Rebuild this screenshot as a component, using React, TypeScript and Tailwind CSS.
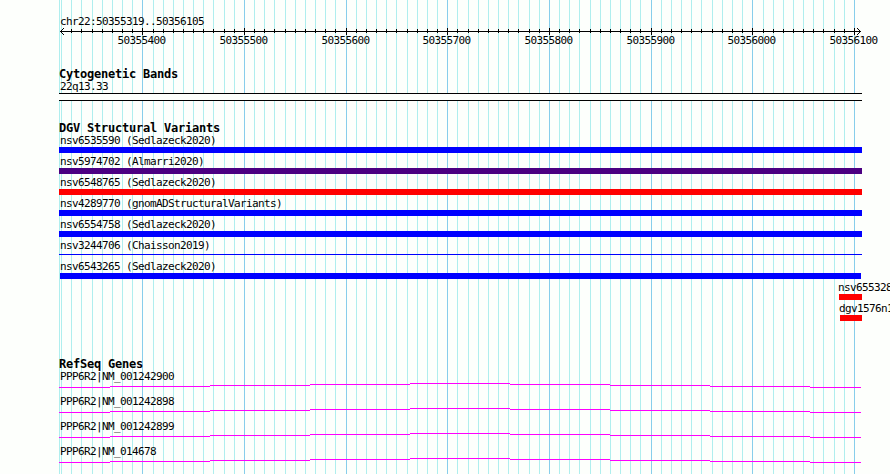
const MINOR = [
  59, 61, 71, 81, 92, 102, 112, 122, 132, 153, 163, 173, 183, 193, 203, 213, 224, 234, 254, 264, 274, 285, 295, 305,
  315, 325, 335, 356, 366, 376, 386, 396, 407, 417, 427, 437, 457, 468, 478, 488, 498, 508, 518, 529, 539, 559, 569,
  579, 590, 600, 610, 620, 630, 640, 661, 671, 681, 691, 701, 712, 722, 732, 742, 763, 773, 783, 793, 803, 813, 823,
  834, 844,
];

const MAJOR = [
  { x: 142, label: "50355400" },
  { x: 244, label: "50355500" },
  { x: 346, label: "50355600" },
  { x: 447, label: "50355700" },
  { x: 549, label: "50355800" },
  { x: 651, label: "50355900" },
  { x: 752, label: "50356000" },
  { x: 854, label: "50356100" },
];

const VARIANTS = [
  { name: "nsv6535590 (Sedlazeck2020)", bar: "h-1.5 bg-[#0000ff]" },
  { name: "nsv5974702 (Almarri2020)", bar: "h-1.5 bg-[#4b0082]" },
  { name: "nsv6548765 (Sedlazeck2020)", bar: "h-1.5 bg-[#ff0000]" },
  { name: "nsv4289770 (gnomADStructuralVariants)", bar: "h-1.5 bg-[#0000ff]" },
  { name: "nsv6554758 (Sedlazeck2020)", bar: "h-1.5 bg-[#0000ff]" },
  { name: "nsv3244706 (Chaisson2019)", bar: "mt-0.5 h-px bg-[#0000ff]" },
  { name: "nsv6543265 (Sedlazeck2020)", bar: "mx-px h-1.5 bg-[#0000ff]" },
];

const GENES = ["PPP6R2|NM_001242900", "PPP6R2|NM_001242898", "PPP6R2|NM_001242899", "PPP6R2|NM_014678"];

const INTRON = [
  "mt-1 w-[51px]",
  "mt-[3px] w-[100px]",
  "mt-0.5 w-[100px]",
  "mt-px w-[100px]",
  "mt-0 w-[100px]",
  "mt-px w-[100px]",
  "mt-0.5 w-[100px]",
  "mt-[3px] w-[100px]",
  "mt-1 w-[51px]",
];

const LABEL = "h-3 whitespace-pre pl-px text-[11px] leading-3 tracking-[-0.622px]";
const HEADING = "h-3.5 whitespace-pre text-[12px] font-bold leading-[14px] tracking-[-0.224px]";

function Gridlines() {
  return (
    <svg className="absolute inset-0" width="890" height="474" shapeRendering="crispEdges" aria-hidden="true">
      {MINOR.map((x) => (
        <rect key={x} x={x} y="0" width="1" height="474" fill="#afeeee" />
      ))}
      {MAJOR.map(({ x }) => (
        <rect key={x} x={x} y="0" width="1" height="474" fill="#87ceeb" />
      ))}
    </svg>
  );
}

function Ruler() {
  return (
    <svg className="-ml-[59px] block" width="890" height="22" viewBox="0 26 890 22">
      <g shapeRendering="crispEdges">
        <rect x="60" y="31" width="801" height="1" />
        {MINOR.slice(2).map((x) => (
          <rect key={x} x={x} y="29" width="1" height="4" />
        ))}
        {MAJOR.map(({ x }) => (
          <rect key={x} x={x} y="28" width="1" height="7" />
        ))}
        {[1, 2, 3].map((d) => (
          <g key={d}>
            <rect x={60 + d} y={31 - d} width="1" height="1" />
            <rect x={60 + d} y={31 + d} width="1" height="1" />
            <rect x={860 - d} y={31 - d} width="1" height="1" />
            <rect x={860 - d} y={31 + d} width="1" height="1" />
          </g>
        ))}
      </g>
      {MAJOR.map(({ x, label }) => (
        <text key={x} x={x - 24.5} y="44" className="text-[11px] tracking-[-0.622px]">
          {label}
        </text>
      ))}
    </svg>
  );
}

export default function App() {
  return (
    <div className="relative h-[474px] w-[890px] overflow-hidden bg-[#fdfffc] font-['DejaVu_Sans_Mono',monospace] text-black">
      <Gridlines />
      <main className="relative ml-[59px] flex w-[803px] flex-col pt-4">
        <div className={`${LABEL} mb-[-2px]`}>chr22:50355319..50356105</div>
        <Ruler />

        <section className="mt-[19px]">
          <h2 className={HEADING}>Cytogenetic Bands</h2>
          <div className={LABEL}>22q13.33</div>
          <div className="h-2 border-y border-black bg-[#fdfffc]" />
        </section>

        <section className="mt-5">
          <h2 className={HEADING}>DGV Structural Variants</h2>
          {VARIANTS.map((v) => (
            <div key={v.name} className="h-[21px]">
              <div className={LABEL}>{v.name}</div>
              <div className={v.bar} />
            </div>
          ))}
          <div className="ml-[780px] h-[21px]">
            <div className={`${LABEL} -ml-0.5`}>nsv655328</div>
            <div className="h-1.5 bg-[#ff0000]" />
          </div>
          <div className="ml-[781px] h-[21px]">
            <div className={`${LABEL} -ml-0.5`}>dgv1576n1</div>
            <div className="h-1.5 bg-[#ff0000]" />
          </div>
        </section>

        <section className="mt-[33px]">
          <h2 className={HEADING}>RefSeq Genes</h2>
          {GENES.map((gene) => (
            <div key={gene} className="h-[25px]">
              <div className={LABEL}>{gene}</div>
              <div className="flex">
                {INTRON.map((step, i) => (
                  <div key={i} className={`${step} h-px bg-[#ff00ff]`} />
                ))}
              </div>
            </div>
          ))}
        </section>
      </main>
    </div>
  );
}
